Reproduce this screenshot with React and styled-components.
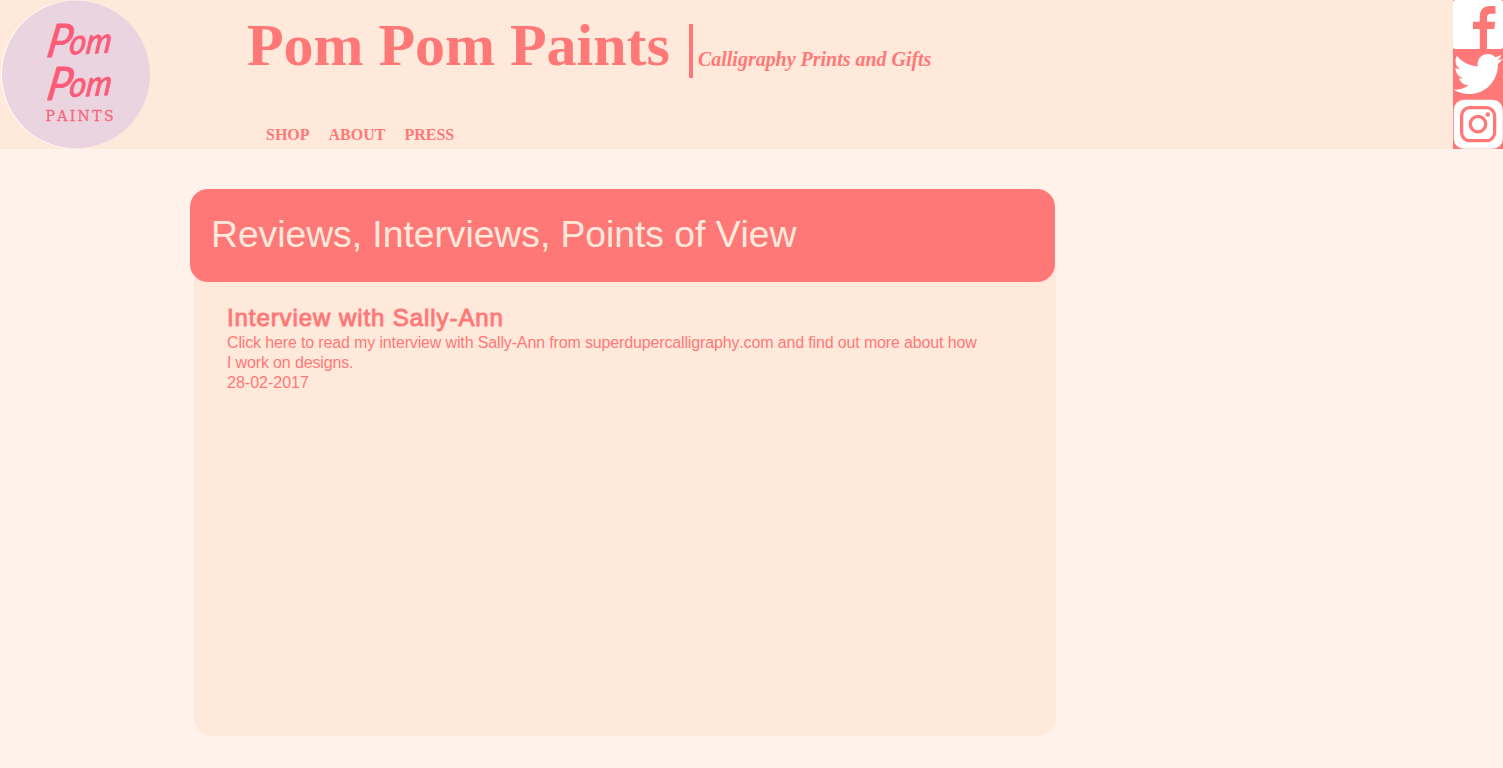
import React from "react";
import styled, { createGlobalStyle } from "styled-components";

const coral = "#ff7878";
const peach = "#ffe9db";

const GlobalStyle = createGlobalStyle`
  body {
    margin: 0;
    background: #fff2ea;
    color: ${coral};
    font-family: "Liberation Sans", Arial, sans-serif;
    font-kerning: none;
  }
`;

const Header = styled.header`
  display: flex;
  height: 149px;
  background: ${peach};
`;

const Logo = styled.svg`
  display: block;
  flex: none;
  width: 152px;
  height: 149px;
`;

const Brand = styled.div`
  flex: 1;
  display: flex;
  flex-direction: column;
  justify-content: space-between;
  padding: 12px 0 4px 95px;
  font-family: "Liberation Serif", "Times New Roman", serif;
  font-weight: bold;
`;

const TitleRow = styled.div`
  display: flex;
  align-items: flex-start;
  white-space: nowrap;
`;

const Title = styled.h1`
  margin: 0;
  width: 442px;
  font-size: 60px;
  line-height: 66px;
  letter-spacing: -0.04px;
`;

const Divider = styled.span`
  width: 4px;
  height: 54px;
  margin-top: 12px;
  background: ${coral};
`;

const Tagline = styled.em`
  margin: 36px 0 0 5px;
  font-size: 20px;
  line-height: 22px;
  letter-spacing: -0.02px;
`;

const Nav = styled.nav`
  display: flex;
  gap: 19px;
  padding-left: 19px;
`;

const NavLink = styled.a`
  font-size: 16px;
  line-height: 20px;
`;

const Social = styled.div`
  display: flex;
  flex-direction: column;
  flex: none;
  width: 50px;
  background: ${coral};
`;

const SocialIcon = styled.svg`
  display: block;
  width: 50px;
  height: ${(p) => p.$height}px;
`;

const Main = styled.main`
  display: flex;
  flex-direction: column;
  width: 866px;
  margin: 40px 0 0 190px;
`;

const Banner = styled.h2`
  z-index: 1;
  box-sizing: border-box;
  width: 865px;
  height: 93px;
  margin: 0;
  padding: 24px 21px;
  border-radius: 18px;
  background: ${coral};
  color: ${peach};
  font-size: 37.33px;
  font-weight: normal;
  line-height: 42px;
  letter-spacing: -0.05px;
  white-space: nowrap;
`;

const Panel = styled.section`
  box-sizing: border-box;
  height: 474px;
  margin: -20px 0 0 4px;
  padding: 42px 60px 0 33px;
  border-radius: 0 0 18px 18px;
  background: ${peach};
`;

const EntryTitle = styled.h3`
  margin: 0 0 1px;
  font-size: 24px;
  font-weight: normal;
  line-height: 28px;
  letter-spacing: 0.92px;
  -webkit-text-stroke: 0.9px ${coral};
`;

const EntryText = styled.p`
  margin: 0;
  font-size: 16px;
  line-height: 20px;
  letter-spacing: ${(p) => p.$tracking || "normal"};
`;

const ink = "#fb5b77";

function ScriptWord({ y }) {
  return (
    <g
      transform={`translate(0 ${y})`}
      fontFamily="Lato, sans-serif"
      fontStyle="italic"
      fill={ink}
      stroke={ink}
      strokeLinejoin="round"
      strokeWidth="0.9"
    >
      <text fontSize="46" textLength="24" lengthAdjust="spacingAndGlyphs" transform="translate(45.500 0) skewX(-10)">
        P
      </text>
      <text
        fontSize="35"
        textLength="42"
        lengthAdjust="spacingAndGlyphs"
        transform="translate(68.500 -2.500) rotate(-3) skewX(-10)"
      >
        om
      </text>
    </g>
  );
}

export default function App() {
  return (
    <>
      <GlobalStyle />
      <Header>
        <Logo viewBox="0 0 152 149">
          <circle cx="75" cy="74.500" r="74.300" fill="#fff8f5" />
          <circle cx="76" cy="74.500" r="74" fill="#ead4df" />
          <ScriptWord y={57} />
          <ScriptWord y={99.5} />
          <text
            x="45.500"
            y="120.500"
            fontFamily="'DejaVu Serif', serif"
            fontSize="14"
            fill="#f9657d"
            stroke="#f9657d"
            strokeWidth="0.3"
            textLength="68"
          >
            PAINTS
          </text>
        </Logo>
        <Brand>
          <TitleRow>
            <Title>Pom Pom Paints</Title>
            <Divider />
            <Tagline>Calligraphy Prints and Gifts</Tagline>
          </TitleRow>
          <Nav>
            <NavLink>SHOP</NavLink>
            <NavLink>ABOUT</NavLink>
            <NavLink>PRESS</NavLink>
          </Nav>
        </Brand>
        <Social>
          <SocialIcon $height={49} viewBox="0 0 50 49">
            <rect width="50" height="49" rx="2.500" fill="#fff" />
            <path
              d="M26.800 49V29H20v-7.300h6.800v-5.200C26.800 9.800 30.600 6 36.800 6c2.400 0 4.600.2 5.700.4v7.400h-4c-3.400 0-4.500 1.600-4.500 4v3.900h8.300L41.200 29H34v20z"
              fill={coral}
            />
          </SocialIcon>
          <SocialIcon $height={50} viewBox="0 0 50 50">
            <path
              transform="translate(0.500 0.300) scale(0.0965)"
              fill="#fff"
              d="M459.37 151.716c.325 4.548.325 9.097.325 13.645 0 138.72-105.583 298.558-298.558 298.558-59.452 0-114.680-17.219-161.137-47.106 8.447.974 16.568 1.299 25.340 1.299 49.055 0 94.213-16.568 130.274-44.832-46.132-.975-84.792-31.188-98.112-72.772 6.498.974 12.995 1.624 19.818 1.624 9.421 0 18.843-1.300 27.614-3.573-48.081-9.747-84.143-51.980-84.143-102.985v-1.299c13.969 7.797 30.214 12.670 47.431 13.319-28.264-18.843-46.781-51.005-46.781-87.391 0-19.492 5.197-37.360 14.294-52.954 51.655 63.675 129.300 105.258 216.365 109.807-1.624-7.797-2.599-15.918-2.599-24.040 0-57.828 46.782-104.934 104.934-104.934 30.213 0 57.502 12.670 76.670 33.137 23.715-4.548 46.456-13.320 66.599-25.340-7.798 24.366-24.366 44.833-46.132 57.827 21.117-2.273 41.584-8.122 60.426-16.243-14.292 20.791-32.161 39.308-52.628 54.253z"
            />
          </SocialIcon>
          <SocialIcon $height={50} viewBox="0 0 50 50">
            <rect x="0.800" y="0.700" width="49" height="49" rx="10" fill="#fff" />
            <g fill="none" stroke={coral} strokeWidth="3.300">
              <rect x="8.600" y="8.700" width="33" height="33" rx="8" />
              <circle cx="25" cy="25.100" r="7.700" />
            </g>
            <circle cx="34.800" cy="15.500" r="2.200" fill={coral} />
          </SocialIcon>
        </Social>
      </Header>
      <Main>
        <Banner>Reviews, Interviews, Points of View</Banner>
        <Panel>
          <EntryTitle>Interview with Sally-Ann</EntryTitle>
          <EntryText $tracking="-0.145px">
            Click here to read my interview with Sally-Ann from superdupercalligraphy.com and find out more about how
            <br />I work on designs.
          </EntryText>
          <EntryText>28-02-2017</EntryText>
        </Panel>
      </Main>
    </>
  );
}
